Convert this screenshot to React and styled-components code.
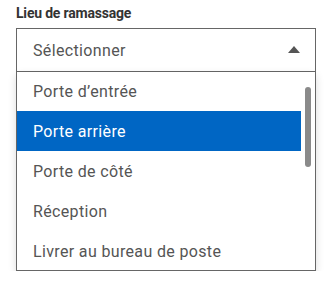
import styled, { createGlobalStyle } from "styled-components";

const GlobalStyle = createGlobalStyle`
    body {
        margin: 0;
        background: #ffffff;
        font-family: Roboto, "Liberation Sans", sans-serif;
    }
`

const Field = styled.div`
    width: 300px;
    padding: 3px 16px 0;
    display: flex;
    flex-direction: column;
`

const Label = styled.span`
    font-size: 14px;
    font-weight: 700;
    line-height: 20px;
    letter-spacing: -0.2px;
    color: #333333;
    margin-bottom: 5px;
`

const SelectBox = styled.div`
    height: 42px;
    border: 1px solid #666666;
    display: flex;
    align-items: center;
    justify-content: space-between;
    padding: 0 15px 0 16px;
    font-size: 16px;
    letter-spacing: 0.35px;
    color: #555555;
`

const Caret = styled.span`
    width: 0;
    height: 0;
    border-left: 6px solid transparent;
    border-right: 6px solid transparent;
    border-bottom: 7px solid #555555;
    margin-top: -1px;
`

const ListBox = styled.div`
    height: 198px;
    border: 1px solid #666666;
    border-top: none;
    display: flex;
    overflow: hidden;
    box-shadow: 0 3px 8px rgba(0, 0, 0, 0.14);
`

const Options = styled.ul`
    list-style: none;
    margin: -1px 0 0;
    padding: 0;
    flex: 1;
`

const Option = styled.li`
    height: 40px;
    display: flex;
    align-items: center;
    padding-left: 16px;
    font-size: 16px;
    letter-spacing: 0.35px;
    color: ${p => (p.$active ? "#ffffff" : "#555555")};
    background: ${p => (p.$active ? "#0066c4" : "transparent")};
`

const Track = styled.div`
    width: 14px;
    display: flex;
    justify-content: center;
    padding-top: 15px;
`

const Thumb = styled.div`
    width: 6px;
    height: 80px;
    border-radius: 3px;
    background: #8a8a8a;
`

const options = [
    "Porte d’entrée",
    "Porte arrière",
    "Porte de côté",
    "Réception",
    "Livrer au bureau de poste",
]

export default function App() {
    return (
        <>
            <GlobalStyle />
            <Field>
                <Label>Lieu de ramassage</Label>
                <SelectBox>
                    Sélectionner
                    <Caret />
                </SelectBox>
                <ListBox>
                    <Options>
                        {options.map((o, i) => (
                            <Option key={o} $active={i === 1}>{o}</Option>
                        ))}
                    </Options>
                    <Track>
                        <Thumb />
                    </Track>
                </ListBox>
            </Field>
        </>
    )
}
